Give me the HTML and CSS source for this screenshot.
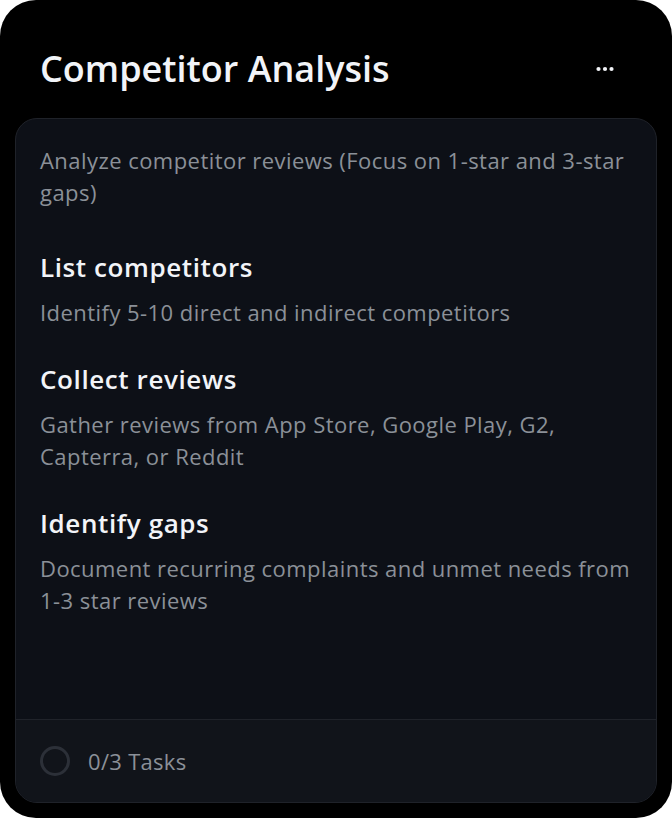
FILE: index.html
```html
<!DOCTYPE html>
<html lang="en">

<head>
  <meta charset="UTF-8" />
  <meta name="viewport" content="width=device-width, initial-scale=1.0" />
  <title>Competitor Analysis</title>
  <link rel="stylesheet" href="styles.css">
</head>

<body>
  <div class="board">
    <div class="board-head">
      <h2>Competitor Analysis</h2>
      <a href="javascript:;" class="more">
        <svg width="18" height="6" viewBox="0 0 18 6">
          <circle cx="2.5" cy="3" r="2.1" fill="#f2f4f8" />
          <circle cx="9" cy="3" r="2.1" fill="#f2f4f8" />
          <circle cx="15.5" cy="3" r="2.1" fill="#f2f4f8" />
        </svg>
      </a>
    </div>
    <div class="card">
      <div class="card-body">
        <p class="intro">Analyze competitor reviews (Focus on 1-star and 3-star gaps)</p>
        <div class="step">
          <h4>List competitors</h4>
          <p>Identify 5-10 direct and indirect competitors</p>
        </div>
        <div class="step">
          <h4>Collect reviews</h4>
          <p>Gather reviews from App Store, Google Play, G2, Capterra, or Reddit</p>
        </div>
        <div class="step">
          <h4>Identify gaps</h4>
          <p>Document recurring complaints and unmet needs from 1-3 star reviews</p>
        </div>
      </div>
      <div class="card-foot">
        <span class="ring"></span>
        <span>0/3 Tasks</span>
      </div>
    </div>
  </div>
</body>

</html>
```

FILE: styles.css
```css
* {
  margin: 0;
  padding: 0;
  box-sizing: border-box;
}

body {
  background: #fff;
  font-family: "Open Sans", "Noto Sans", sans-serif;
}

.board {
  width: 672px;
  height: 818px;
  background: #000;
  border-radius: 36px;
  padding: 0 15px 15px;
  display: flex;
  flex-direction: column;
}

.board-head {
  height: 118px;
  display: flex;
  align-items: center;
  justify-content: space-between;
  padding: 19px 43px 0 25px;
}

.board-head h2 {
  color: #f2f4f8;
  font-size: 36px;
  font-weight: 600;
  line-height: 44px;
}

.more {
  display: flex;
}

.card {
  flex: 1;
  display: flex;
  flex-direction: column;
  background: #0d1017;
  border: 1px solid #1f2229;
  border-radius: 22px;
  overflow: hidden;
}

.card-body {
  flex: 1;
  padding: 25px 24px 0;
}

.card-body p {
  color: #8b9098;
  font-size: 22px;
  letter-spacing: 0.45px;
  line-height: 32px;
}

.intro {
  margin-bottom: 43px;
}

.step {
  margin-bottom: 35px;
}

.step h4 {
  color: #f2f4f8;
  font-size: 26px;
  font-weight: 600;
  letter-spacing: 0.6px;
  line-height: 32px;
  margin-bottom: 13px;
}

.card-foot {
  height: 83px;
  border-top: 1px solid #20232a;
  background: #11141a;
  display: flex;
  align-items: center;
  gap: 18px;
  padding: 0 24px;
  color: #8b9098;
  font-size: 22px;
  letter-spacing: 0.3px;
}

.ring {
  width: 30px;
  height: 30px;
  border: 3px solid #2c3038;
  border-radius: 50%;
}
```
